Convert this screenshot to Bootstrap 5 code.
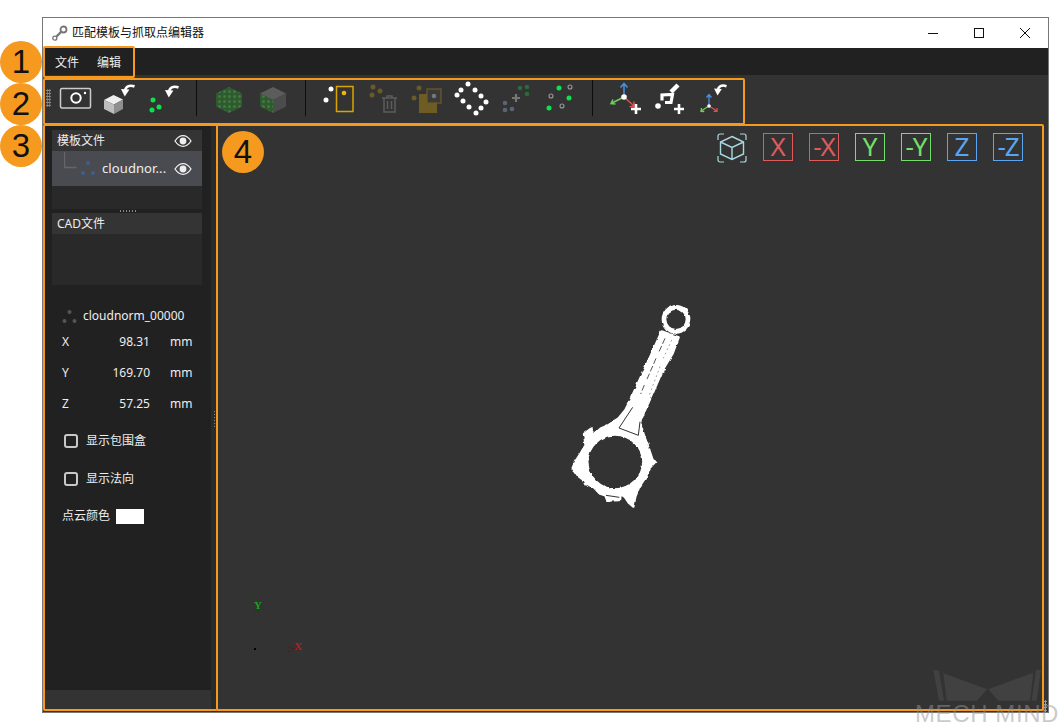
<!DOCTYPE html>
<html lang="en">
<head>
<meta charset="UTF-8">
<meta name="viewport" content="width=device-width, initial-scale=1.0">
<title>匹配模板与抓取点编辑器</title>
<link href="https://cdn.jsdelivr.net/npm/bootstrap@5.3.0/dist/css/bootstrap.min.css" rel="stylesheet">
<style>
body { background: #fff; height: 727px; overflow: hidden; position: relative; font-family: "Noto Sans", "Noto Sans CJK SC", sans-serif; font-size: 12px; color: #eee; }
svg { display: block; flex: none; }

.app-win { margin: 17px 0 0 42px; width: 1007px; height: 696px; border: 1px solid #777; background: #333; }
.title-row { height: 30px; background: #fff; color: #111; padding-left: 9px; }
.win-btns { gap: 30px; padding-right: 15px; }
.menu-row { height: 27px; background: #212121; padding: 3px 0 0 12px; gap: 18px; }
.tool-row { height: 49px; background: #333; padding: 4px 0 0 3px; }
.grip-v { width: 5px; height: 18px; margin: 10px 2px 0 0; background: radial-gradient(circle, #888 1px, transparent 1.1px) 0 0 / 2.5px 3px; }
.tool-btn { width: 44.3px; height: 44px; display: flex; justify-content: center; }
.tool-sep { width: 1px; height: 36px; background: #0c0c0c; margin: 1px 10px 0 10px; }

.main-row { height: 588px; }
.side-col { width: 168px; background: #333; }
.side-dark { height: 566px; background: #212121; padding: 6px 9px 0 9px; }
.tree-box { height: 79px; background: #292929; }
.cad-box { height: 72px; background: #292929; }
.tree-head { height: 21px; background: #343434; padding: 0 10px 0 5px; line-height: 1; }
.tree-item { height: 35px; background: #4a4b50; padding: 0 10px 0 12px; font-size: 13px; }
.item-name { margin-left: 7px; white-space: nowrap; letter-spacing: .1px; }
.grip-h { height: 4px; width: 17px; margin: 0 auto; background: radial-gradient(circle, #888 .8px, transparent 1px) 0 0 / 3px 4px; }

.prop-name { margin: 22px 0 0 10px; height: 18px; gap: 6px; }
.prop-row { height: 31px; padding-left: 10px; }
.prop-row .prop-lab { width: 47px; }
.prop-row .prop-val { width: 41px; text-align: right; }
.prop-row .prop-unit { margin-left: 20px; }
.prop-list { margin-top: 1px; }
.chk-row { height: 38px; padding-left: 12px; gap: 8px; }
.chk-first { margin-top: 3px; }
.chk-box { width: 14px; height: 14px; margin: 0; background: transparent; border: 2px solid #c8c8c8; border-radius: 2px; }
.color-row { height: 36px; padding-left: 10px; gap: 6px; }
.color-chip { width: 28px; height: 15px; background: #fff; }

.split-col { width: 6px; background: #2b2b2b; }
.grip-s { width: 3px; height: 17px; background: radial-gradient(circle, #888 .8px, transparent 1px) 0 0 / 3px 3px; }

.viewer { position: relative; flex: 1; background: #333; padding: 9px 25px 0 0; overflow: hidden; }
.ax-btn { width: 30px; height: 28px; border: 1px solid; font-size: 26px; line-height: 25px; text-align: center; font-family: "Noto Sans", sans-serif; white-space: nowrap; }
.ax-r { color: #e05a5a; border-color: #e05a5a; }
.ax-g { color: #74e06a; border-color: #74e06a; }
.ax-b { color: #5aa5f2; border-color: #5aa5f2; }
.ax-neg { letter-spacing: -1px; }
.rod { position: absolute; left: 333px; top: 166px; }
.axes-lab { position: absolute; left: 30px; top: 470px; }
.axes-lab text { font-family: "Liberation Serif", serif; font-size: 11px; font-weight: 700; }

.mark-box { position: absolute; border: 2px solid #f59a1f; border-radius: 2px; pointer-events: none; }
.mk1 { left: 43px; top: 46px; width: 92px; height: 32px; }
.mk2 { left: 43px; top: 78px; width: 702px; height: 47px; }
.mk3 { left: 43px; top: 124px; width: 175px; height: 587px; }
.mk4 { left: 216px; top: 124px; width: 828px; height: 587px; }
.num-dot { position: absolute; width: 42px; height: 42px; border-radius: 50%; background: #f59a1f; color: #111; font-family: "Liberation Sans", sans-serif; font-size: 33px; line-height: 42px; text-align: center; }
.nd1 { left: 0; top: 41px; }
.nd2 { left: 0; top: 83px; }
.nd3 { left: 0; top: 125px; }
.nd4 { left: 222px; top: 131px; }
.wm-logo { position: absolute; left: 932px; top: 669px; }
.wm-text { position: absolute; left: 915px; top: 699px; font-family: "Liberation Sans", sans-serif; font-size: 24px; letter-spacing: .6px; line-height: 30px; color: rgba(150,150,150,.5); white-space: nowrap; }
.grip-c { position: absolute; left: 1044px; top: 700px; width: 3px; height: 12px; background: radial-gradient(circle, #999 1px, transparent 1.1px) 0 0 / 3px 3px; }
</style>
</head>
<body>

<svg width="0" height="0" style="position:absolute">
  <defs>
    <symbol id="undo-arrow" viewBox="0 0 14 13">
      <path d="M13.500 2.400C8 .6 4.600 2.600 4 7" fill="none" stroke="#fff" stroke-width="2.700"/>
      <path d="M0 5l8.400.4L3.800 12.500z" fill="#fff"/>
    </symbol>
    <symbol id="eye" viewBox="0 0 18 14">
      <path d="M1 7C3.5 3.2 6 1.6 9 1.6S14.500 3.200 17 7C14.500 10.800 12 12.400 9 12.400S3.500 10.800 1 7z" fill="none" stroke="#eee" stroke-width="1.300"/>
      <circle cx="9" cy="7" r="3.400" fill="#eee"/>
    </symbol>
    <pattern id="grn" width="5" height="5" patternUnits="userSpaceOnUse">
      <rect width="5" height="5" fill="#2f5a30"/>
      <circle cx="2.500" cy="2.500" r="1.500" fill="#3f7a3f"/>
    </pattern>
    <filter id="rough" x="-5%" y="-5%" width="110%" height="110%">
      <feTurbulence type="fractalNoise" baseFrequency=".06" numOctaves="2" seed="4" result="n"/>
      <feDisplacementMap in="SourceGraphic" in2="n" scale="9" xChannelSelector="R" yChannelSelector="G"/>
    </filter>
  </defs>
</svg>

<div class="app-win d-flex flex-column">
  <div class="title-row d-flex align-items-center">
    <svg width="16" height="16" viewBox="0 0 16 16" class="me-1">
      <path d="M2.500 13.500L10 6" stroke="#777" stroke-width="2.400"/>
      <circle cx="2.800" cy="13.200" r="2" fill="#fff" stroke="#777" stroke-width="1.300"/>
      <circle cx="11.500" cy="4.500" r="3" fill="#fff" stroke="#777" stroke-width="1.800"/>
    </svg>
    <span>匹配模板与抓取点编辑器</span>
    <div class="win-btns d-flex align-items-center ms-auto">
      <svg width="16" height="12" viewBox="0 0 16 12"><path d="M3 6.500h10" stroke="#111"/></svg>
      <svg width="16" height="12" viewBox="0 0 16 12"><rect x="3.500" y="1.500" width="9" height="9" fill="none" stroke="#111"/></svg>
      <svg width="16" height="12" viewBox="0 0 16 12"><path d="M3 1l10 10M13 1L3 11" stroke="#111"/></svg>
    </div>
  </div>

  <div class="menu-row d-flex align-items-center">
    <span>文件</span>
    <span>编辑</span>
  </div>

  <div class="tool-row d-flex">
    <div class="grip-v"></div>
    <div class="tool-btn">
      <svg width="44" height="44" viewBox="0 0 44 44">
        <rect x="7.500" y="9.500" width="30" height="19.500" rx="1.500" fill="none" stroke="#ccc" stroke-width="1.500"/>
        <circle cx="23" cy="19" r="4.700" fill="none" stroke="#fff" stroke-width="2"/>
        <circle cx="32" cy="14" r="1.200" fill="#fff"/>
      </svg>
    </div>
    <div class="tool-btn">
      <svg width="44" height="44" viewBox="0 0 44 44">
        <path d="M7 21l9.500-5 9.500 4.500-9 5z" fill="#eee"/>
        <path d="M7 21l10 4.500V35l-10-5z" fill="#bdbdbd"/>
        <path d="M17 25.500l9-5V30l-9 5z" fill="#8e8e8e"/>
        <use href="#undo-arrow" x="24" y="5" width="14" height="13"/>
      </svg>
    </div>
    <div class="tool-btn">
      <svg width="44" height="44" viewBox="0 0 44 44">
        <g fill="#0de24a"><circle cx="11" cy="21" r="2.500"/><circle cx="17" cy="28" r="2.500"/><circle cx="10" cy="31" r="2.500"/></g>
        <use href="#undo-arrow" x="23" y="6" width="14" height="13"/>
      </svg>
    </div>
    <div class="tool-sep"></div>
    <div class="tool-btn">
      <svg width="44" height="44" viewBox="0 0 44 44">
        <path d="M22 8l13 6.500v13L22 34 9 27.500v-13z" fill="url(#grn)"/>
      </svg>
    </div>
    <div class="tool-btn">
      <svg width="44" height="44" viewBox="0 0 44 44">
        <path d="M22 8l13 6.500-13 6.500-13-6.500z" fill="#5c5c5c"/>
        <path d="M22 21l13-6.500v13L22 34z" fill="#4c4c4c"/>
        <path d="M9 14.500l13 6.500v13L9 27.500z" fill="url(#grn)"/>
      </svg>
    </div>
    <div class="tool-sep"></div>
    <div class="tool-btn">
      <svg width="44" height="44" viewBox="0 0 44 44">
        <circle cx="14" cy="10" r="2.500" fill="#fff"/><circle cx="9" cy="21" r="2.500" fill="#fff"/>
        <rect x="19.500" y="7.500" width="16.500" height="25" fill="none" stroke="#d9a400" stroke-width="1.500"/>
        <circle cx="27" cy="14" r="2.300" fill="#f2b705"/>
      </svg>
    </div>
    <div class="tool-btn">
      <svg width="44" height="44" viewBox="0 0 44 44">
        <g fill="#6a5a28"><circle cx="12" cy="8" r="2.500"/><circle cx="19" cy="12" r="2.500"/><circle cx="11" cy="16" r="2.500"/></g>
        <g fill="none" stroke="#5c5c5c" stroke-width="1.500">
          <path d="M21 19h15M26 19v-2h5v2"/>
          <path d="M23 19v14h11V19M26.500 22v8M30.500 22v8"/>
        </g>
      </svg>
    </div>
    <div class="tool-btn">
      <svg width="44" height="44" viewBox="0 0 44 44">
        <g fill="#6a5a28"><circle cx="14" cy="9" r="2.500"/><circle cx="9" cy="19" r="2.500"/></g>
        <rect x="14" y="15" width="18" height="19" fill="#6f5c22"/>
        <rect x="22" y="10" width="14" height="14" fill="#3a3a3a" stroke="#6f5c22" stroke-width="1.200"/>
        <circle cx="29" cy="17" r="2.300" fill="#777"/>
      </svg>
    </div>
    <div class="tool-btn">
      <svg width="44" height="44" viewBox="0 0 44 44">
        <g fill="#fff"><circle cx="18" cy="5" r="2.500"/><circle cx="11" cy="11" r="2.500"/><circle cx="25" cy="11" r="2.500"/><circle cx="7" cy="16" r="2.500"/><circle cx="31" cy="17" r="2.500"/><circle cx="13" cy="22" r="2.500"/><circle cx="36" cy="23" r="2.500"/><circle cx="19" cy="28" r="2.500"/><circle cx="31" cy="29" r="2.500"/><circle cx="26" cy="34" r="2.500"/></g>
      </svg>
    </div>
    <div class="tool-btn">
      <svg width="44" height="44" viewBox="0 0 44 44">
        <g fill="#2b6b3a"><circle cx="26" cy="9" r="2.300"/><circle cx="33" cy="8" r="2.300"/><circle cx="33" cy="15" r="2.300"/></g>
        <g fill="#5a6475"><circle cx="11" cy="24" r="2.300"/><circle cx="11" cy="31" r="2.300"/><circle cx="18" cy="30" r="2.300"/></g>
        <path d="M22 15v8M18 19h8" stroke="#777" stroke-width="2.200"/>
      </svg>
    </div>
    <div class="tool-btn">
      <svg width="44" height="44" viewBox="0 0 44 44">
        <g fill="#0de24a"><circle cx="21" cy="9" r="2.500"/><circle cx="31" cy="19" r="2.500"/><circle cx="11" cy="29" r="2.500"/></g>
        <g fill="none" stroke="#999" stroke-width="1.100"><circle cx="32" cy="8" r="2"/><circle cx="13" cy="17" r="2"/><circle cx="24" cy="27" r="2"/></g>
      </svg>
    </div>
    <div class="tool-sep"></div>
    <div class="tool-btn">
      <svg width="44" height="44" viewBox="0 0 44 44">
        <path d="M21 18V5M17.500 8.500L21 4.500l3.500 4" fill="none" stroke="#4a90e2" stroke-width="1.500"/>
        <path d="M21 18L9 24M10 20.500L8 24.500l4.500.5" fill="none" stroke="#6fcf5a" stroke-width="1.500"/>
        <path d="M21 18l10 9M31 22.500V27.500h-4.500" fill="none" stroke="#d9534f" stroke-width="1.500"/>
        <circle cx="21" cy="18" r="2.800" fill="#fff"/>
        <path d="M33 25v10M28 30h10" stroke="#fff" stroke-width="2.600"/>
      </svg>
    </div>
    <div class="tool-btn">
      <svg width="44" height="44" viewBox="0 0 44 44">
        <circle cx="10" cy="27" r="2.800" fill="#fff"/>
        <path d="M17 23.500h6l1.500-8-10.500.5v5.500" fill="none" stroke="#fff" stroke-width="3.200"/>
        <path d="M23 13l7-7" stroke="#fff" stroke-width="4.500"/>
        <path d="M31 25v10M26 30h10" stroke="#fff" stroke-width="2.600"/>
      </svg>
    </div>
    <div class="tool-btn">
      <svg width="44" height="44" viewBox="0 0 44 44">
        <path d="M17 27V16M14.500 18.500L17 15.500l2.500 3" fill="none" stroke="#4a90e2" stroke-width="1.300"/>
        <path d="M17 27L9 32M9.500 29l-.5 3.300 3.300.200" fill="none" stroke="#6fcf5a" stroke-width="1.300"/>
        <path d="M17 27l8 5M25 29v3.300h-3.300" fill="none" stroke="#d9534f" stroke-width="1.300"/>
        <circle cx="17" cy="27" r="1.800" fill="#fff"/>
        <use href="#undo-arrow" x="22" y="5" width="13" height="12"/>
      </svg>
    </div>
  </div>

  <div class="main-row d-flex">
    <div class="side-col">
      <div class="side-dark">
        <div class="tree-box">
          <div class="tree-head d-flex align-items-center justify-content-between">
            <span>模板文件</span>
            <svg width="18" height="14"><use href="#eye"/></svg>
          </div>
          <div class="tree-item d-flex align-items-center">
            <svg width="31" height="35" viewBox="0 0 31 35">
              <path d="M.500 1v15.500h12" fill="none" stroke="#666" stroke-width="1.300"/>
              <g fill="#3f5f8c"><circle cx="24" cy="12" r="2"/><circle cx="19" cy="22" r="2"/><circle cx="29" cy="22" r="2"/></g>
            </svg>
            <span class="item-name">cloudnor...</span>
            <svg width="18" height="14" class="ms-auto"><use href="#eye"/></svg>
          </div>
        </div>
        <div class="grip-h"></div>
        <div class="cad-box">
          <div class="tree-head d-flex align-items-center"><span>CAD文件</span></div>
        </div>

        <div class="prop-name d-flex align-items-center">
          <svg width="15" height="15" viewBox="0 0 15 15">
            <g fill="#555"><circle cx="7.500" cy="3" r="2"/><circle cx="2.500" cy="12" r="2"/><circle cx="12.500" cy="12" r="2"/></g>
          </svg>
          <span>cloudnorm_00000</span>
        </div>
        <div class="prop-list">
          <div class="prop-row d-flex align-items-center"><span class="prop-lab">X</span><span class="prop-val">98.31</span><span class="prop-unit">mm</span></div>
          <div class="prop-row d-flex align-items-center"><span class="prop-lab">Y</span><span class="prop-val">169.70</span><span class="prop-unit">mm</span></div>
          <div class="prop-row d-flex align-items-center"><span class="prop-lab">Z</span><span class="prop-val">57.25</span><span class="prop-unit">mm</span></div>
        </div>
        <div class="chk-row chk-first d-flex align-items-center">
          <input class="form-check-input chk-box" type="checkbox">
          <span>显示包围盒</span>
        </div>
        <div class="chk-row d-flex align-items-center">
          <input class="form-check-input chk-box" type="checkbox">
          <span>显示法向</span>
        </div>
        <div class="color-row d-flex align-items-center">
          <span>点云颜色</span>
          <div class="color-chip"></div>
        </div>
      </div>
    </div>

    <div class="split-col d-flex align-items-center justify-content-center">
      <div class="grip-s"></div>
    </div>

    <div class="viewer">
      <div class="d-flex justify-content-end gap-3">
        <svg width="30" height="30" viewBox="0 0 30 30" fill="none" stroke="#a8d8e0" stroke-width="1.200">
          <path d="M1 7V3a2 2 0 0 1 2-2h4M23 1h4a2 2 0 0 1 2 2v4M29 23v4a2 2 0 0 1-2 2h-4M7 29H3a2 2 0 0 1-2-2v-4"/>
          <path d="M15 3.500L26.500 9v12L15 26.500 3.500 21V9zM3.500 9L15 14.500 26.500 9M15 14.500v12" stroke-width="1.400"/>
        </svg>
        <div class="ax-btn ax-r">X</div>
        <div class="ax-btn ax-r ax-neg">-X</div>
        <div class="ax-btn ax-g">Y</div>
        <div class="ax-btn ax-g ax-neg">-Y</div>
        <div class="ax-btn ax-b">Z</div>
        <div class="ax-btn ax-b ax-neg">-Z</div>
      </div>

      <svg class="rod" width="160" height="220" viewBox="0 0 480 660">
        <g filter="url(#rough)">
          <circle cx="378" cy="88" r="36" fill="none" stroke="#fff" stroke-width="14"/>
          <path fill="#fff" stroke="#fff" stroke-width="7" stroke-linejoin="round" fill-rule="evenodd" d="M335 124L386 142L368 190L338 240L308 310L283 365L270 398L283 440L298 480L308 510L316 515L298 535L288 560L268 590L256 620L250 650L236 638L224 620L212 612L210 630L172 632L166 616L148 610L128 588L108 586L98 568L85 558L68 534L76 515L92 490L107 465L102 432L122 417L132 434L152 416L176 405L206 385L226 360L241 330L271 265L301 200z M195 434C150 434 112 470 112 515C112 560 150 598 195 598C240 598 280 560 280 515C280 470 240 434 195 434z"/>
        </g>
        <g fill="none" stroke="#333">
          <path d="M207 414L248 352M207 414L265 436L270 395" stroke-width="3"/>
          <path d="M345 145L325 190M318 205L290 270M283 285L272 312" stroke-width="2.500" stroke-dasharray="18 7"/>
          <path d="M365 150L340 205M330 230L298 315" stroke-width="1.500" stroke-dasharray="5 9"/>
          <path d="M112 586L142 610M168 616L208 622" stroke-width="3"/>
        </g>
      </svg>

      <svg class="axes-lab" width="60" height="60" viewBox="0 0 60 60">
        <path d="M7 21l4-8 2 9" fill="none" stroke="#1c3f1c"/>
        <text x="7" y="15" fill="#1aa31a">Y</text>
        <rect x="7" y="54" width="2" height="2" fill="#000"/>
        <path d="M41 53l7 2-7 3" fill="none" stroke="#4a2020"/>
        <text x="47" y="56" fill="#c8141c">X</text>
      </svg>
    </div>
  </div>
</div>

<div class="mark-box mk1"></div>
<div class="mark-box mk2"></div>
<div class="mark-box mk3"></div>
<div class="mark-box mk4"></div>
<div class="num-dot nd1">1</div>
<div class="num-dot nd2">2</div>
<div class="num-dot nd3">3</div>
<div class="num-dot nd4">4</div>

<svg class="wm-logo" width="110" height="34" viewBox="0 0 110 34" fill="rgba(160,160,160,.13)">
  <path d="M1.300 1L7 1.700 12 31.700H7zM11.300 4.300L55.300 20.300 44.700 31.700H14.700zM109 1H104L99.700 31.700H104.700zM101.300 3.700L56.300 20.300 66.300 31.700H98z"/>
</svg>
<div class="wm-text">MECH MIND</div>
<div class="grip-c"></div>

</body>
</html>
